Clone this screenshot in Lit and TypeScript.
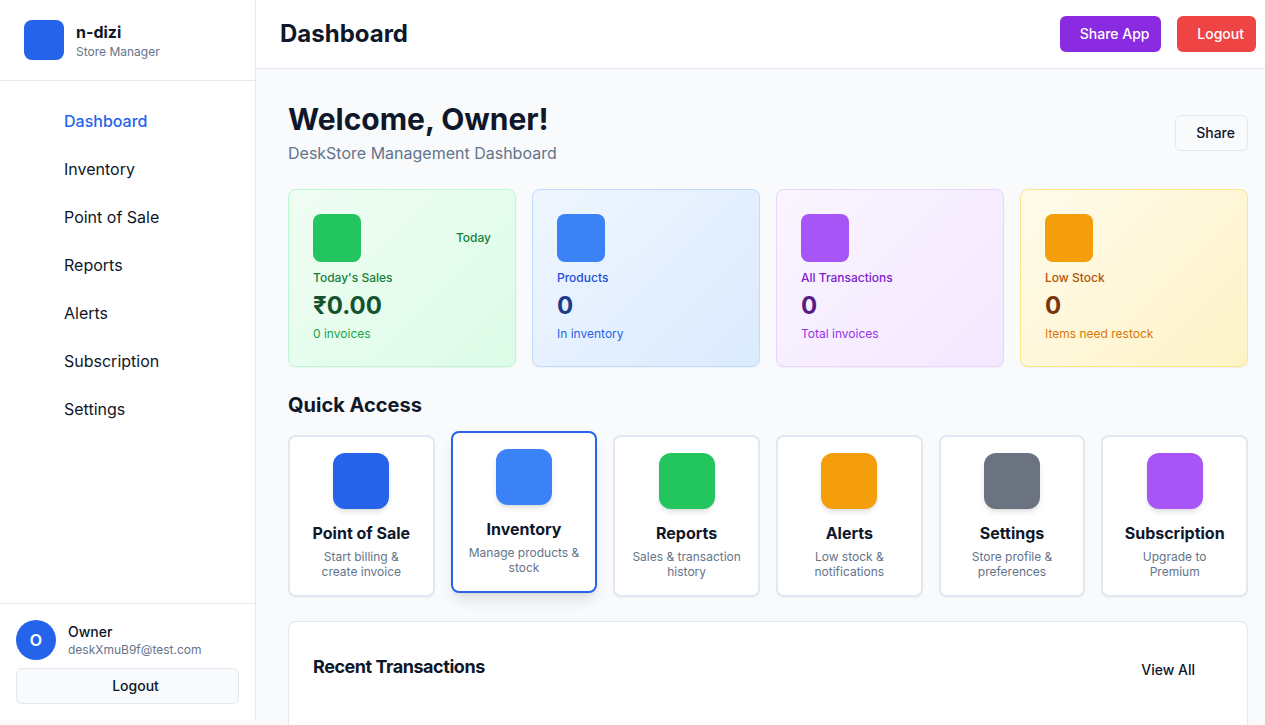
import { LitElement, html, css } from "lit";
import { customElement } from "lit/decorators.js";

const stats = [
  { key: "green", label: "Today's Sales", value: "₹0.00", note: "0 invoices", tag: "Today" },
  { key: "blue", label: "Products", value: "0", note: "In inventory", tag: "" },
  { key: "purple", label: "All Transactions", value: "0", note: "Total invoices", tag: "" },
  { key: "amber", label: "Low Stock", value: "0", note: "Items need restock", tag: "" },
];

const links = [
  { title: "Point of Sale", text: "Start billing & create invoice", tone: "t-primary" },
  { title: "Inventory", text: "Manage products & stock", tone: "t-blue", active: true },
  { title: "Reports", text: "Sales & transaction history", tone: "t-green" },
  { title: "Alerts", text: "Low stock & notifications", tone: "t-amber" },
  { title: "Settings", text: "Store profile & preferences", tone: "t-gray" },
  { title: "Subscription", text: "Upgrade to Premium", tone: "t-purple" },
];

const nav = ["Dashboard", "Inventory", "Point of Sale", "Reports", "Alerts", "Subscription", "Settings"];

@customElement("app-root")
export class AppRoot extends LitElement {
  static styles = css`
    :host { display: flex; height: 725px; overflow: hidden; background: #fafafa; color: #0f172a;
      font-family: Inter, "Liberation Sans", sans-serif; font-size: 16px; line-height: 24px; }
    * { box-sizing: border-box; margin: 0; }
    button { font: 500 14px/20px Inter, sans-serif; color: #0f172a; border: 1px solid #e2e8f0; border-radius: 6px; background: #f8fafc; height: 36px; padding: 0; }
    .side { width: 256px; height: 720px; flex: none; background: #fff; border-right: 1px solid #e2e8f0; display: flex; flex-direction: column; }
    .brand { height: 81px; padding: 20px 24px; display: flex; gap: 12px; border-bottom: 1px solid #e2e8f0; }
    .logo { width: 40px; height: 40px; border-radius: 8px; background: #2563eb; }
    .brand-name { font-weight: 700; line-height: 24px; }
    .small { font-size: 12px; line-height: 16px; color: #64748b; }
    nav { flex: 1; padding: 16px; }
    .nav-item { height: 48px; padding: 12px 48px; }
    .nav-item.on { color: #2563eb; font-weight: 500; }
    .account { border-top: 1px solid #e2e8f0; padding: 16px; height: 117px; }
    .user { display: flex; gap: 12px; margin-bottom: 8px; }
    .avatar { width: 40px; height: 40px; border-radius: 50%; background: #2563eb; color: #fff; font-weight: 600; line-height: 40px; text-align: center; }
    .user-text { padding-top: 2px; }
    .user-name { font-size: 14px; font-weight: 500; line-height: 20px; }
    .out { width: 223px; display: block; padding-left: 16px; }
    .main { flex: 1; min-width: 0; background: #f8fafc; }
    .top { height: 69px; background: #fff; border-bottom: 1px solid #e2e8f0; padding: 16px 9px 16px 24px; display: flex; gap: 16px; }
    .top-title { font-size: 24px; font-weight: 700; line-height: 36px; flex: 1; }
    .top button { color: #fff; border: 0; text-align: right; padding-right: 12px; }
    .top .share-app { width: 101px; background: #8a2be2; padding-right: 11.5px; }
    .exit { width: 79px; background: #ef4444; }
    .content { padding: 32px 17px 0 32px; }
    .intro { display: flex; justify-content: space-between; align-items: center; height: 64px; margin-bottom: 24px; }
    h1 { font-size: 30px; line-height: 36px; font-weight: 700; }
    .sub { color: #64748b; margin-top: 4px; }
    .share { width: 73px; text-align: right; padding-right: 12px; }
    .stats { display: grid; grid-template-columns: repeat(4, 1fr); gap: 16px; }
    .stat { height: 178px; border: 1px solid; border-radius: 8px; padding: 24px; box-shadow: 0 1px 2px rgba(0,0,0,.05); }
    .row { display: flex; justify-content: space-between; align-items: center; height: 48px; margin-bottom: 8px; }
    .box { width: 48px; height: 48px; border-radius: 8px; }
    .tag, .label { font-size: 12px; font-weight: 500; line-height: 16px; }
    .value { font-size: 24px; line-height: 32px; font-weight: 700; margin: 4px 0; }
    .note { font-size: 12px; line-height: 16px; }
    .green { background: linear-gradient(135deg, #f0fdf4, #dcfce7); border-color: #bbf7d0; color: #15803d; }
    .green .value { color: #14532d; } .green .note { color: #16a34a; }
    .blue { background: linear-gradient(135deg, #eff6ff, #dbeafe); border-color: #bfdbfe; color: #1d4ed8; }
    .blue .value { color: #1e3a8a; } .blue .note { color: #2563eb; }
    .purple { background: linear-gradient(135deg, #faf5ff, #f3e8ff); border-color: #e9d5ff; color: #7e22ce; }
    .purple .value { color: #581c87; } .purple .note { color: #9333ea; }
    .amber { background: linear-gradient(135deg, #fffbeb, #fef3c7); border-color: #fde68a; color: #b45309; }
    .amber .value { color: #78350f; } .amber .note { color: #d97706; }
    .green .box, .t-green { background: #22c55e; }
    .blue .box, .t-blue { background: #3b82f6; }
    .purple .box, .t-purple { background: #a855f7; }
    .amber .box, .t-amber { background: #f59e0b; }
    .t-primary { background: #2563eb; } .t-gray { background: #6b7280; }
    h2 { font-size: 20px; line-height: 28px; font-weight: 700; margin: 24px 0 16px; }
    .links { display: grid; grid-template-columns: repeat(6, 1fr); gap: 16px; }
    .link { height: 162px; background: #fff; border: 2px solid #e2e8f0; border-radius: 8px; padding: 16px; text-align: center; box-shadow: 0 1px 2px rgba(0,0,0,.05); }
    .link.active { border-color: #2563eb; transform: translateY(-4px); box-shadow: 0 10px 15px -3px rgba(0,0,0,.1), 0 4px 6px -4px rgba(0,0,0,.1); }
    .tile { width: 56px; height: 56px; border-radius: 12px; margin: 0 auto 12px; box-shadow: 0 4px 6px -1px rgba(0,0,0,.1), 0 2px 4px -2px rgba(0,0,0,.1); }
    .link-title { font-weight: 700; line-height: 24px; margin: 0 -12px 4px; }
    .link-text { font-size: 12px; line-height: 15px; color: #64748b; }
    .recent { margin-top: 24px; height: 180px; background: #fff; border: 1px solid #e2e8f0; border-radius: 8px; padding: 30px 52px 0 24px; display: flex; justify-content: space-between; box-shadow: 0 1px 2px rgba(0,0,0,.05); }
    h3 { font-size: 18px; line-height: 30px; font-weight: 700; letter-spacing: -0.025em; }
    .all { font-size: 14px; font-weight: 500; line-height: 36px; }
  `;

  render() {
    return html`
      <aside class="side">
        <div class="brand">
          <div class="logo"></div>
          <div><div class="brand-name">n-dizi</div><div class="small">Store Manager</div></div>
        </div>
        <nav>${nav.map((n, i) => html`<div class="nav-item ${i === 0 ? "on" : ""}">${n}</div>`)}</nav>
        <div class="account">
          <div class="user">
            <div class="avatar">O</div>
            <div class="user-text"><div class="user-name">Owner</div><div class="small">deskXmuB9f@test.com</div></div>
          </div>
          <button class="out">Logout</button>
        </div>
      </aside>
      <div class="main">
        <header class="top">
          <div class="top-title">Dashboard</div>
          <button class="share-app">Share App</button>
          <button class="exit">Logout</button>
        </header>
        <main class="content">
          <div class="intro">
            <div><h1>Welcome, Owner!</h1><div class="sub">DeskStore Management Dashboard</div></div>
            <button class="share">Share</button>
          </div>
          <div class="stats">
            ${stats.map((s) => html`<section class="stat ${s.key}">
              <div class="row"><div class="box"></div><span class="tag">${s.tag}</span></div>
              <div class="label">${s.label}</div><div class="value">${s.value}</div><div class="note">${s.note}</div>
            </section>`)}
          </div>
          <h2>Quick Access</h2>
          <div class="links">
            ${links.map((l) => html`<section class="link ${l.active ? "active" : ""}">
              <div class="tile ${l.tone}"></div>
              <div class="link-title">${l.title}</div><div class="link-text">${l.text}</div>
            </section>`)}
          </div>
          <section class="recent"><h3>Recent Transactions</h3><span class="all">View All</span></section>
        </main>
      </div>
    `;
  }
}
